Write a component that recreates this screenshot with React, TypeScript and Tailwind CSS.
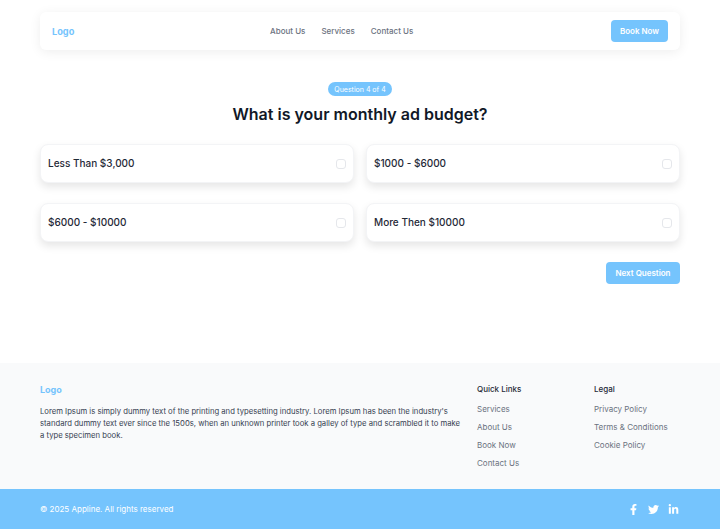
import React from 'react';
import { FaFacebookF, FaTwitter, FaLinkedinIn } from 'react-icons/fa';

const options = ['Less Than $3,000', '$1000 - $6000', '$6000 - $10000', 'More Then $10000'];
const quickLinks = ['Services', 'About Us', 'Book Now', 'Contact Us'];
const legalLinks = ['Privacy Policy', 'Terms & Conditions', 'Cookie Policy'];

const NavBar = () => {
    return (
        <nav className="h-[38px] rounded-md bg-white pl-3 pr-3 flex items-center justify-between shadow-[0_2px_12px_rgba(0,0,0,0.07)]">
            <span className="mt-px text-[9.2px] font-bold text-[#75c4fd]">Logo</span>
            <ul className="flex items-center gap-4 text-[8px] font-medium text-[#6b7280] mr-[2px]">
                <li>About Us</li>
                <li>Services</li>
                <li>Contact Us</li>
            </ul>
            <button className="w-[57px] h-[22px] rounded bg-[#75c4fd] text-white text-[8px] font-semibold">
                Book Now
            </button>
        </nav>
    );
};

const Footer = () => {
    return (
        <footer>
            <div className="h-[126px] bg-[#f9fafb] pl-10 pt-5 flex">
                <div className="w-[437px]">
                    <div className="mt-px text-[9px] leading-3 font-bold text-[#75c4fd]">Logo</div>
                    <p className="mt-[10px] w-[424px] text-[7.7px] leading-3 text-[#374151]">
                        Lorem Ipsum is simply dummy text of the printing and typesetting industry. Lorem Ipsum has been the industry's standard dummy text ever since the 1500s, when an unknown printer took a galley of type and scrambled it to make a type specimen book.
                    </p>
                </div>
                <div className="w-[117px]">
                    <h4 className="text-[8px] leading-3 font-medium text-[#1f2937]">Quick Links</h4>
                    <ul className="mt-2 space-y-1.5 text-[8px] leading-3 text-[#6b7280]">
                        {quickLinks.map((link) => <li key={link}>{link}</li>)}
                    </ul>
                </div>
                <div>
                    <h4 className="text-[8px] leading-3 font-medium text-[#1f2937]">Legal</h4>
                    <ul className="mt-2 space-y-1.5 text-[8px] leading-3 text-[#6b7280]">
                        {legalLinks.map((link) => <li key={link}>{link}</li>)}
                    </ul>
                </div>
            </div>
            <div className="h-10 bg-[#75c4fd] px-10 flex items-center justify-between text-white">
                <span className="text-[8px]">© 2025 Appline. All rights reserved</span>
                <div className="flex items-center gap-[9px] text-[11px] mr-[1px]">
                    <FaFacebookF />
                    <FaTwitter />
                    <FaLinkedinIn />
                </div>
            </div>
        </footer>
    );
};

export default function App() {
    return (
        <div className="w-[720px] h-[529px] bg-white flex flex-col overflow-hidden font-['Inter',sans-serif]">
            <div className="flex-grow px-10 pt-3">
                <NavBar />
                <div className="mt-8 flex flex-col items-center">
                    <span className="h-[14px] w-[64px] pt-[2px] flex items-center justify-center rounded-full bg-[#75c4fd] text-white text-[7px]">
                        Question 4 of 4
                    </span>
                    <h1 className="mt-[7px] text-[16px] leading-[22px] font-semibold text-[#111827]">
                        What is your monthly ad budget?
                    </h1>
                </div>
                <div className="mt-[19px] grid grid-cols-2 gap-x-3 gap-y-5">
                    {options.map((option) => (
                        <div key={option} className="h-[39px] rounded-lg border border-[#f3f4f6] bg-white pl-[7px] pr-[7px] flex items-center justify-between shadow-[0_4px_8px_rgba(0,0,0,0.1)]">
                            <span className="text-[10px] font-medium text-[#1f2937]">{option}</span>
                            <span className="w-[10px] h-[10px] rounded-[3px] border border-[#e5e7eb]" />
                        </div>
                    ))}
                </div>
                <div className="mt-5 flex justify-end">
                    <button className="w-[74px] h-[22px] rounded bg-[#75c4fd] text-white text-[8px] font-semibold">
                        Next Question
                    </button>
                </div>
            </div>
            <Footer />
        </div>
    );
}
